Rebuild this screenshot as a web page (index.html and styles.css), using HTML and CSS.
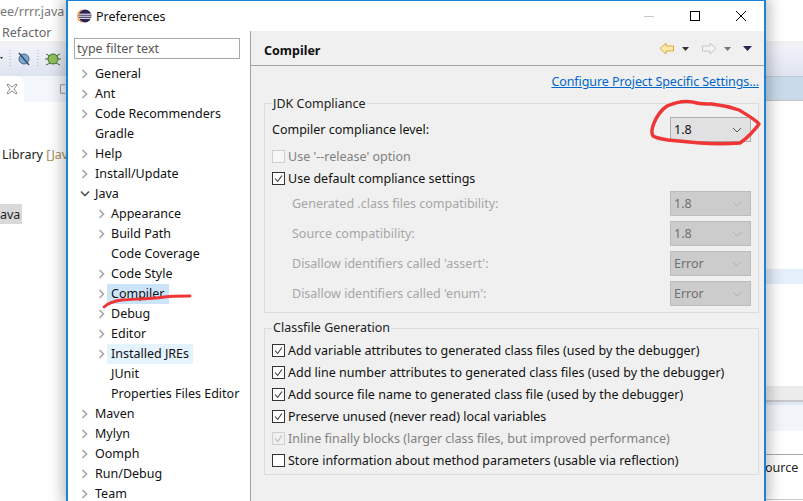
FILE: index.html
```html
<!DOCTYPE html>
<html>
<head>
<meta charset="utf-8">
<title>Preferences</title>
<link rel="stylesheet" href="styles.css">
</head>
<body>
<div class="desktop">
  <div class="bg-left">
    <div class="bg-title">ee/rrrr.java</div>
    <div class="bg-menu">Refactor</div>
    <div class="bg-toolbar">
      <svg width="66" height="35" viewBox="0 0 66 35">
        <path d="M0 16h3l-1.500 2z" fill="#222"/>
        <path d="M10 9v16M38 9v16" stroke="#aaa" stroke-dasharray="1 2"/>
        <circle cx="24" cy="18" r="5" fill="#7fa8cf" stroke="#46688c"/>
        <path d="M19 12l10 12" stroke="#33506e" stroke-width="1.500"/>
        <circle cx="53" cy="18" r="5" fill="#8fc25a" stroke="#3f6b2a"/>
        <path d="M46 13l4 2M60 13l-4 2M45 18h3M61 18h-3M46 24l4-2M60 24l-4-2" stroke="#3f6b2a"/>
      </svg>
    </div>
    <div class="bg-tabs">
      <div class="bg-tab">
        <svg width="12" height="12" viewBox="0 0 12 12"><path d="M2 1l4 3 4-3 1 1-3 4 3 4-1 1-4-3-4 3-1-1 3-4-3-4z" fill="#fff" stroke="#8a8a8a"/></svg>
      </div>
      <svg class="bg-restore" width="6" height="12" viewBox="0 0 6 12"><path d="M.500 1.500h5M.500 1.500v9h5" fill="none" stroke="#8a9aa8"/></svg>
    </div>
    <div class="bg-library">Library <span class="bg-decor">[Java</span></div>
    <div class="bg-selected">ava</div>
  </div>
  <div class="bg-right">
    <div class="r-toolbar"></div>
    <div class="r-band"></div>
    <div class="r-row"></div>
    <div class="r-gray"></div>
    <div class="r-line"></div>
    <div class="r-pale"></div>
    <div class="r-src">ource</div>
  </div>

  <div class="dialog">
    <div class="titlebar">
      <svg class="logo" width="16" height="16" viewBox="0 0 16 16">
        <circle cx="8" cy="8" r="6.500" fill="#2c2255"/>
        <path d="M1.500 6.200h13M1.300 8.200h13.400M1.800 10.300h12.400" stroke="#fff" stroke-width="1"/>
        <path d="M5 1.700A6.800 6.800 0 0 0 5 14.300" fill="none" stroke="#f7941e" stroke-width="1.200"/>
      </svg>
      <span class="title-text">Preferences</span>
      <div class="controls">
        <svg width="12" height="12" viewBox="0 0 12 12"><path d="M1 6.500h10" stroke="#c8c8c8"/></svg>
        <svg width="12" height="12" viewBox="0 0 12 12"><rect x="1.500" y="1.500" width="9" height="9" fill="none" stroke="#000"/></svg>
        <svg width="12" height="12" viewBox="0 0 12 12"><path d="M1 1l10 10M11 1L1 11" stroke="#000"/></svg>
      </div>
    </div>
    <div class="body">
      <div class="side">
        <div class="filter">type filter text</div>
        <div class="tree">
          <div class="node"><svg class="chev" viewBox="0 0 8 10"><path d="M1.500 1l4 4-4 4" /></svg><span class="lbl">General</span></div>
          <div class="node"><svg class="chev" viewBox="0 0 8 10"><path d="M1.500 1l4 4-4 4" /></svg><span class="lbl">Ant</span></div>
          <div class="node"><svg class="chev" viewBox="0 0 8 10"><path d="M1.500 1l4 4-4 4" /></svg><span class="lbl">Code Recommenders</span></div>
          <div class="node leaf"><span class="lbl">Gradle</span></div>
          <div class="node"><svg class="chev" viewBox="0 0 8 10"><path d="M1.500 1l4 4-4 4" /></svg><span class="lbl">Help</span></div>
          <div class="node"><svg class="chev" viewBox="0 0 8 10"><path d="M1.500 1l4 4-4 4" /></svg><span class="lbl">Install/Update</span></div>
          <div class="node"><svg class="chev open" viewBox="0 0 10 8"><path d="M1 1.500l4 4 4-4" /></svg><span class="lbl">Java</span></div>
          <div class="node sub"><svg class="chev" viewBox="0 0 8 10"><path d="M1.500 1l4 4-4 4" /></svg><span class="lbl">Appearance</span></div>
          <div class="node sub"><svg class="chev" viewBox="0 0 8 10"><path d="M1.500 1l4 4-4 4" /></svg><span class="lbl">Build Path</span></div>
          <div class="node sub leaf"><span class="lbl">Code Coverage</span></div>
          <div class="node sub"><svg class="chev" viewBox="0 0 8 10"><path d="M1.500 1l4 4-4 4" /></svg><span class="lbl">Code Style</span></div>
          <div class="node sub"><svg class="chev" viewBox="0 0 8 10"><path d="M1.500 1l4 4-4 4" /></svg><span class="lbl selected">Compiler</span></div>
          <div class="node sub"><svg class="chev" viewBox="0 0 8 10"><path d="M1.500 1l4 4-4 4" /></svg><span class="lbl">Debug</span></div>
          <div class="node sub"><svg class="chev" viewBox="0 0 8 10"><path d="M1.500 1l4 4-4 4" /></svg><span class="lbl">Editor</span></div>
          <div class="node sub"><svg class="chev" viewBox="0 0 8 10"><path d="M1.500 1l4 4-4 4" /></svg><span class="lbl hover">Installed JREs</span></div>
          <div class="node sub leaf"><span class="lbl">JUnit</span></div>
          <div class="node sub leaf"><span class="lbl">Properties Files Editor</span></div>
          <div class="node"><svg class="chev" viewBox="0 0 8 10"><path d="M1.500 1l4 4-4 4" /></svg><span class="lbl">Maven</span></div>
          <div class="node"><svg class="chev" viewBox="0 0 8 10"><path d="M1.500 1l4 4-4 4" /></svg><span class="lbl">Mylyn</span></div>
          <div class="node"><svg class="chev" viewBox="0 0 8 10"><path d="M1.500 1l4 4-4 4" /></svg><span class="lbl">Oomph</span></div>
          <div class="node"><svg class="chev" viewBox="0 0 8 10"><path d="M1.500 1l4 4-4 4" /></svg><span class="lbl">Run/Debug</span></div>
          <div class="node"><svg class="chev" viewBox="0 0 8 10"><path d="M1.500 1l4 4-4 4" /></svg><span class="lbl">Team</span></div>
        </div>
      </div>
      <div class="main">
        <div class="head">
          <span class="head-title">Compiler</span>
          <div class="nav">
            <svg width="16" height="13" viewBox="0 0 16 13"><path d="M1 6.500L7 1v3h7.500v5H7v3z" fill="#ffe9a8" stroke="#d9a93c"/></svg>
            <svg class="drop" width="7" height="4" viewBox="0 0 7 4"><path d="M0 0h7L3.500 4z" fill="#333"/></svg>
            <svg width="16" height="13" viewBox="0 0 16 13"><path d="M15 6.500L9 1v3H1.500v5H9v3z" fill="#f4f4f4" stroke="#c4c4c4"/></svg>
            <svg class="drop" width="7" height="4" viewBox="0 0 7 4"><path d="M0 0h7L3.500 4z" fill="#777"/></svg>
            <svg class="drop menu" width="9" height="5" viewBox="0 0 9 5"><path d="M0 0h9L4.500 5z" fill="#2c2255"/></svg>
          </div>
        </div>
        <div class="content">
          <div class="linkrow"><a class="link">Configure Project Specific Settings...</a></div>
          <div class="group jdk">
            <div class="legend">JDK Compliance</div>
            <div class="row first">
              <span class="text">Compiler compliance level:</span>
              <div class="combo active"><span>1.8</span><svg class="arrow" viewBox="0 0 10 6"><path d="M1 1l4 4 4-4"/></svg></div>
            </div>
            <div class="check off disabled"><span class="box"></span><span class="text">Use '--release' option</span></div>
            <div class="check on"><span class="box"><svg viewBox="0 0 13 13"><path d="M2.500 6.500l3 3.500 5-7"/></svg></span><span class="text">Use default compliance settings</span></div>
            <div class="row opt dim first-opt"><span class="text">Generated .class files compatibility:</span><div class="combo"><span>1.8</span><svg class="arrow" viewBox="0 0 10 6"><path d="M1 1l4 4 4-4"/></svg></div></div>
            <div class="row opt dim"><span class="text">Source compatibility:</span><div class="combo"><span>1.8</span><svg class="arrow" viewBox="0 0 10 6"><path d="M1 1l4 4 4-4"/></svg></div></div>
            <div class="row opt dim"><span class="text">Disallow identifiers called 'assert':</span><div class="combo"><span>Error</span><svg class="arrow" viewBox="0 0 10 6"><path d="M1 1l4 4 4-4"/></svg></div></div>
            <div class="row opt dim"><span class="text">Disallow identifiers called 'enum':</span><div class="combo"><span>Error</span><svg class="arrow" viewBox="0 0 10 6"><path d="M1 1l4 4 4-4"/></svg></div></div>
          </div>
          <div class="group cls">
            <div class="legend">Classfile Generation</div>
            <div class="check on"><span class="box"><svg viewBox="0 0 13 13"><path d="M2.500 6.500l3 3.500 5-7"/></svg></span><span class="text">Add variable attributes to generated class files (used by the debugger)</span></div>
            <div class="check on"><span class="box"><svg viewBox="0 0 13 13"><path d="M2.500 6.500l3 3.500 5-7"/></svg></span><span class="text">Add line number attributes to generated class files (used by the debugger)</span></div>
            <div class="check on"><span class="box"><svg viewBox="0 0 13 13"><path d="M2.500 6.500l3 3.500 5-7"/></svg></span><span class="text">Add source file name to generated class file (used by the debugger)</span></div>
            <div class="check on"><span class="box"><svg viewBox="0 0 13 13"><path d="M2.500 6.500l3 3.500 5-7"/></svg></span><span class="text">Preserve unused (never read) local variables</span></div>
            <div class="check on disabled"><span class="box"><svg viewBox="0 0 13 13"><path d="M2.500 6.500l3 3.500 5-7"/></svg></span><span class="text">Inline finally blocks (larger class files, but improved performance)</span></div>
            <div class="check off"><span class="box"></span><span class="text">Store information about method parameters (usable via reflection)</span></div>
          </div>
        </div>
      </div>
    </div>
  </div>

  <svg class="ink" width="803" height="501" viewBox="0 0 803 501">
    <path d="M697 103c-10-3-21-1-30 3-6 4-10 10-13 17-2 5-3 10-1 13 3 2 9 3 15 4 11 1 22 2 32 3 13 1 27 1 40 0 7-5 14-12 19-19-3-4-10-8-20-14-9-3-18-5-27-6-5 0-10 0-15-1z" fill="none" stroke="#ef3535" stroke-width="3.400" stroke-linejoin="round"/>
    <path d="M104 307c4-4 10-6 18-7 14-1 28-1 42-3 9-1 17-1 26-1" fill="none" stroke="#ef3535" stroke-width="2.800" stroke-linecap="round"/>
  </svg>
</div>
</body>
</html>
```
FILE: styles.css
```css
html, body {
  margin: 0;
  padding: 0;
  height: 100%;
  overflow: hidden;
  background: #fff;
}
.desktop {
  position: relative;
  width: 803px;
  height: 501px;
  overflow: hidden;
  font-family: "Noto Sans", "Liberation Sans", sans-serif;
  font-size: 12.5px;
  color: #111;
  display: flex;
  justify-content: space-between;
}
.bg-left {
  width: 66px;
  white-space: nowrap;
}
.bg-title {
  height: 24px;
  line-height: 24px;
  color: #777;
}
.bg-menu {
  height: 17px;
  line-height: 18px;
  margin-left: 2px;
  color: #666;
}
.bg-toolbar {
  height: 35px;
  background: linear-gradient(#f1f1f1 0, #f0f2f9 20%, #dde3f0 100%);
}
.bg-toolbar svg { display: block; }
.bg-tabs {
  height: 26px;
  display: flex;
  background: #f3f6fb;
  align-items: center;
}
.bg-tab {
  width: 19px;
  height: 26px;
  padding-left: 6px;
  background: #fff;
  border-radius: 0 8px 0 0;
  display: flex;
  align-items: center;
}
.bg-restore { margin-left: 36px; }
.bg-library {
  margin-top: 42px;
  height: 20px;
  line-height: 21px;
  margin-left: 2px;
  color: #222;
}
.bg-decor { color: #a98a5a; }
.bg-selected {
  margin-top: 40px;
  width: 22px;
  height: 20px;
  line-height: 21px;
  background: #d9d9d9;
  color: #222;
}
.bg-right {
  width: 38px;
  padding-top: 41px;
  box-sizing: border-box;
}
.r-toolbar {
  height: 35px;
  background: linear-gradient(#f1f1f1 0, #f0f2f9 20%, #dfe4f1 100%);
}
.r-band {
  height: 25px;
  background: #c9dbea;
  border-top: 1px solid #bcc8d4;
  border-bottom: 1px solid #c5c5c5;
  box-sizing: border-box;
}
.r-row {
  height: 15px;
  margin-top: 168px;
  background: #e5effb;
}
.r-gray {
  height: 16px;
  margin-top: 102px;
  background: #ececec;
  border-bottom: 2px solid #c8c8c8;
  box-sizing: border-box;
}
.r-line {
  height: 3px;
  background: #dfe6f5;
}
.r-pale {
  height: 26px;
  background: #f4f5fb;
}
.r-src {
  margin-top: 23px;
  border-top: 1px solid #a8a8a8;
  height: 44px;
  border-bottom: 1px solid #c8c8c8;
  line-height: 26px;
  color: #222;
}
.dialog {
  position: absolute;
  left: 66px;
  top: 0;
  width: 696px;
  height: 501px;
  border-left: 2px solid #1883d7;
  border-right: 2px solid #1883d7;
  border-top: 1px solid #1883d7;
  background: #fff;
  box-shadow: 0 0 14px 3px rgba(0, 0, 0, .28);
  display: flex;
  flex-direction: column;
}
.titlebar {
  height: 30px;
  display: flex;
  align-items: center;
  flex: none;
}
.logo {
  margin-left: 9px;
  margin-right: 3px;
}
.title-text { color: #111; }
.controls {
  margin-left: auto;
  display: flex;
  gap: 34px;
  margin-right: 17px;
}
.body {
  flex: 1;
  display: flex;
  min-height: 0;
}
.side {
  width: 182px;
  flex: none;
  border-right: 1px solid #a0a0a0;
  overflow: hidden;
}
.filter {
  margin: 7px 0 0 6px;
  width: 162px;
  height: 19px;
  line-height: 20px;
  border: 1px solid #a9a9a9;
  padding-left: 2px;
  color: #555;
}
.tree { margin-top: 5px; }
.node {
  height: 20px;
  display: flex;
  align-items: center;
  white-space: nowrap;
}
.chev {
  width: 8px;
  height: 10px;
  margin-left: 13px;
  margin-right: 6px;
  flex: none;
}
.chev path {
  fill: none;
  stroke: #a6a6a6;
  stroke-width: 1.600;
}
.chev.open {
  width: 10px;
  height: 8px;
  margin-left: 12px;
  margin-right: 5px;
}
.chev.open path { stroke: #555; }
.lbl {
  height: 20px;
  line-height: 20px;
  padding: 0 4px;
  margin-left: -4px;
}
.node.leaf .lbl { margin-left: 27px; padding: 0; }
.node.sub .chev { margin-left: 30px; margin-right: 5px; }
.node.sub .lbl { margin-left: -4px; padding: 0 4px; }
.node.sub.leaf .lbl { margin-left: 43px; padding: 0; }
.lbl.selected { background: #cce4f9; }
.lbl.hover { background: #e5f3ff; }
.main {
  flex: 1;
  background: #f0f0f0;
  display: flex;
  flex-direction: column;
  min-width: 0;
}
.head {
  height: 35px;
  flex: none;
  border-bottom: 1px solid #a6a6a6;
  display: flex;
  align-items: center;
  box-sizing: border-box;
  padding: 4px 0 0 13px;
}
.head-title {
  font-weight: 700;
  font-size: 12.5px;
  color: #111;
}
.nav {
  margin-left: auto;
  margin-right: 12px;
  margin-top: -3px;
  display: flex;
  align-items: center;
}
.nav .drop { margin: 0 12px 0 7px; }
.nav .drop.menu { margin: 0; }
.content {
  padding: 6px 5px 0 13px;
}
.linkrow {
  text-align: right;
  height: 20px;
  line-height: 20px;
}
.link {
  color: #0066cc;
  text-decoration: underline;
  letter-spacing: -.08px;
}
.group {
  border: 1px solid #dcdcdc;
  padding: 0 7px;
  box-sizing: border-box;
}
.group.jdk {
  margin-top: 11px;
  height: 210px;
}
.group.cls {
  margin-top: 15px;
  height: 147px;
}
.legend {
  background: #f0f0f0;
  width: max-content;
  height: 16px;
  line-height: 16px;
  margin-top: -9px;
  padding: 0 1px;
  color: #222;
}
.group.jdk .legend { line-height: 18px; }
.row {
  display: flex;
  align-items: center;
  justify-content: space-between;
  height: 25px;
}
.row.first { margin-top: 6px; }
.row.opt { margin-top: 5px; padding-left: 20px; }
.row.first-opt { margin-top: 2px; }
.combo {
  width: 81px;
  height: 25px;
  box-sizing: border-box;
  border: 1px solid #bcbcbc;
  background: #ccc;
  color: #6f6f6f;
  display: flex;
  align-items: center;
  justify-content: space-between;
  padding: 0 8px 0 3px;
}
.combo.active {
  background: #e1e1e1;
  border-color: #adadad;
  color: #111;
}
.arrow {
  width: 10px;
  height: 6px;
}
.arrow path {
  fill: none;
  stroke: #b0b0b0;
  stroke-width: 1;
}
.combo.active .arrow path { stroke: #555; }
.check {
  display: flex;
  align-items: center;
  height: 22px;
  white-space: nowrap;
}
.box {
  width: 13px;
  height: 13px;
  box-sizing: border-box;
  border: 1px solid #333;
  background: #fff;
  margin-right: 3px;
  flex: none;
  display: block;
}
.box svg {
  display: block;
  width: 11px;
  height: 11px;
}
.box path {
  fill: none;
  stroke: #333;
  stroke-width: 1.200;
}
.check.disabled .text { color: #808080; }
.check.disabled .box { border-color: #cfcfcf; background: #f0f0f0; }
.check.disabled .box path { stroke: #b4b4b4; }
.check.off.disabled .box { background: #f7f7f7; }
.group.jdk .check.off { margin-top: 3px; }
.group.cls .legend { margin-bottom: 3px; }
.dim .text { color: #a6a6a6; }
.ink {
  position: absolute;
  left: 0;
  top: 0;
  pointer-events: none;
}
```
